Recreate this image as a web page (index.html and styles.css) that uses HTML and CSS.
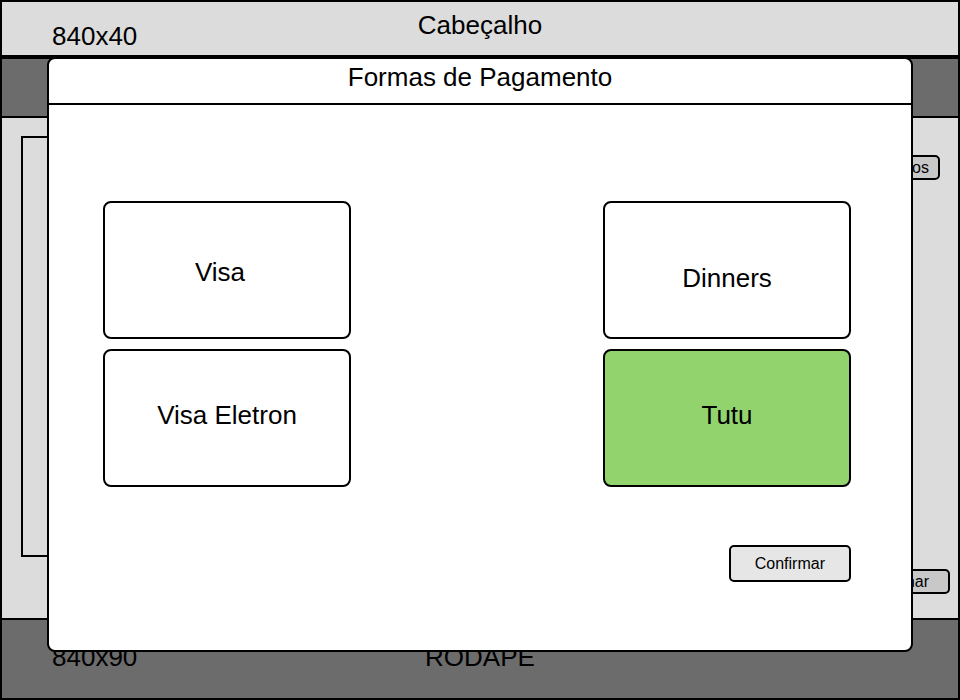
FILE: index.html
```html
<!DOCTYPE html>
<html lang="pt-BR">
<head>
  <meta charset="utf-8">
  <meta name="viewport" content="width=device-width, initial-scale=1">
  <title>Formas de Pagamento</title>
  <link rel="stylesheet" href="styles.css">
</head>
<body>
  <div class="page">
    <header class="banner">
      <span class="size">840x40</span>
      <span class="banner-title">Cabeçalho</span>
    </header>
    <nav class="menu"></nav>
    <main class="content">
      <div class="content-row">
        <section class="panel"></section>
        <button class="btn" type="button">Produtos</button>
      </div>
      <div class="actions">
        <button class="btn btn-wide" type="button">Confirmar</button>
      </div>
    </main>
    <footer class="footer">
      <span class="size">840x90</span>
      <span class="footer-title">RODAPE</span>
    </footer>

    <div class="dialog" role="dialog" aria-labelledby="dialog-title">
      <h1 class="dialog-title" id="dialog-title">Formas de Pagamento</h1>
      <div class="dialog-body">
        <div class="options">
          <button class="option option-visa" type="button">Visa</button>
          <button class="option option-dinners" type="button">Dinners</button>
          <button class="option option-bottom" type="button">Visa Eletron</button>
          <button class="option option-bottom selected" type="button" aria-pressed="true">Tutu</button>
        </div>
        <button class="btn btn-confirm" type="button">Confirmar</button>
      </div>
    </div>
  </div>
</body>
</html>
```
FILE: styles.css
```css
* {
  box-sizing: border-box;
}

body {
  margin: 0;
  color: #000;
  font: 26px/30px "Liberation Sans", Arial, sans-serif;
}

.page {
  position: relative;
  display: flex;
  flex-direction: column;
  min-height: 100vh;
  border: 2px solid #000;
  background: #dcdcdc;
}

.banner,
.footer {
  display: grid;
  grid-template-columns: 1fr auto 1fr;
}

.banner {
  min-height: 57px;
  padding: 8px 0 4px;
  border-bottom: 4px solid #000;
}

.size {
  padding-left: 50px;
}

.banner .size {
  align-self: end;
}

.menu {
  height: 59px;
  border-bottom: 2px solid #000;
  background: #6c6c6c;
}

.content {
  flex: 1;
  display: flex;
  flex-direction: column;
  gap: 12px;
  padding: 18px 8px 24px 19px;
}

.content-row {
  flex: 1;
  display: flex;
  align-items: flex-start;
  gap: 16px;
  padding-right: 10px;
}

.panel {
  flex: 1;
  align-self: stretch;
  border: 2px solid #000;
}

.content-row .btn {
  margin-top: 19px;
}

.actions {
  display: flex;
  justify-content: flex-end;
}

.btn {
  padding: 2px 9px 1px;
  border: 2px solid #000;
  border-radius: 5px;
  background: #c8c8c8;
  color: #000;
  font: 16px/18px "Liberation Sans", Arial, sans-serif;
}

.btn-wide {
  padding-left: 19px;
  padding-right: 19px;
}

.footer {
  min-height: 80px;
  padding-top: 22px;
  border-top: 2px solid #000;
  background: #6c6c6c;
}

.dialog {
  position: absolute;
  top: 55px;
  left: 45px;
  right: 45px;
  border: 2px solid #000;
  border-radius: 8px;
  background: #fff;
}

.dialog-title {
  margin: 0;
  padding: 3px 0 11px;
  border-bottom: 2px solid #000;
  font-size: 26px;
  font-weight: 400;
  line-height: 30px;
  text-align: center;
}

.dialog-body {
  display: flex;
  flex-direction: column;
  align-items: flex-end;
  gap: 58px;
  padding: 96px 60px 68px 54px;
}

.options {
  align-self: stretch;
  display: grid;
  grid-template-columns: 248px 248px;
  justify-content: space-between;
  row-gap: 10px;
}

.option {
  height: 138px;
  padding: 0;
  border: 2px solid #000;
  border-radius: 8px;
  background: #fff;
  color: #000;
  font: inherit;
}

.option-visa {
  padding: 4px 14px 0 0;
}

.option-dinners {
  padding-top: 16px;
}

.option-bottom {
  padding-bottom: 6px;
}

.option.selected {
  background: #92d36e;
}

.btn-confirm {
  padding: 8px 24px 7px;
  background: #e6e6e6;
}
```
